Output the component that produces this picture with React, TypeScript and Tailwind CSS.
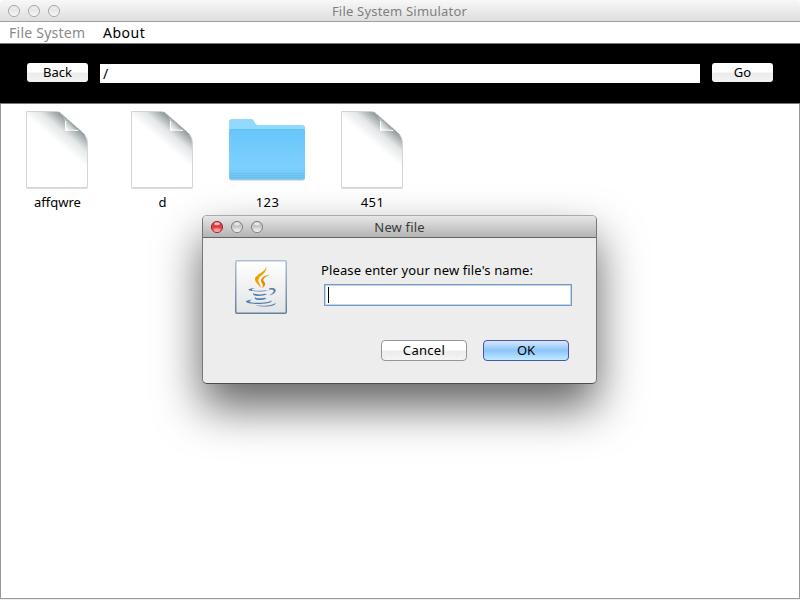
import type { ReactNode } from "react";

function TrafficLight({ x, kind }: { x: number; kind: "idle" | "red" | "grey" }) {
  return (
    <g transform={`translate(${x} 7)`}>
      <circle r="5.6" fill={`url(#light-${kind})`} stroke={kind === "red" ? "#963036" : kind === "grey" ? "#858585" : "#acacac"} />
      <ellipse cy="-3.2" rx="2.8" ry="1.5" fill="#fff" opacity={kind === "idle" ? 0.3 : 0.65} />
      {kind !== "idle" && <ellipse cy="3" rx="3.3" ry="2" fill="#fff" opacity=".3" />}
    </g>
  );
}

function TrafficLights({ active = false }: { active?: boolean }) {
  return (
    <svg width="56" height="14" viewBox="0 0 56 14" className="shrink-0">
      <defs>
        <linearGradient id="light-idle" x2="0" y2="1"><stop stopColor="#dedede" /><stop offset="1" stopColor="#f6f6f6" /></linearGradient>
        <linearGradient id="light-red" x2="0" y2="1"><stop stopColor="#ca4a4b" /><stop offset=".5" stopColor="#e7383c" /><stop offset="1" stopColor="#ff8d8a" /></linearGradient>
        <linearGradient id="light-grey" x2="0" y2="1"><stop stopColor="#b5b5b5" /><stop offset=".5" stopColor="#cbcbcb" /><stop offset="1" stopColor="#e7e7e7" /></linearGradient>
      </defs>
      <TrafficLight x={7} kind={active ? "red" : "idle"} />
      <TrafficLight x={27} kind={active ? "grey" : "idle"} />
      <TrafficLight x={47} kind={active ? "grey" : "idle"} />
    </svg>
  );
}

function FileIcon() {
  return (
    <svg width="64" height="80" viewBox="0 0 64 80">
      <defs>
        <linearGradient id="page" gradientUnits="userSpaceOnUse" x1="50" y1="15" x2="34" y2="34">
          <stop stopColor="#899194" /><stop offset=".2" stopColor="#aeb5b7" /><stop offset=".5" stopColor="#e3e6e7" /><stop offset="1" stopColor="#fff" />
        </linearGradient>
        <linearGradient id="curl" gradientUnits="userSpaceOnUse" x1="48" y1="11" x2="40" y2="19">
          <stop stopColor="#7c8285" /><stop offset=".5" stopColor="#c9ced0" /><stop offset="1" stopColor="#fff" />
        </linearGradient>
      </defs>
      <path d="M1.500 78.500h61" stroke="#ddd" />
      <path d="M1.500 1.500H31C35 1.500 37 5 41 8L57 22C61 26 62.500 28 62.500 35V77.500H1.500Z" fill="url(#page)" stroke="#d4d5d5" />
      <path d="M34 2.500C37 5 39 7 40 11V20.500C47 20 52 20 56 22Z" fill="url(#curl)" />
      <path d="M40.500 11V20.500C45 20 49 20 53 20.500" fill="none" stroke="#fff" />
      <path d="M34 2L60 25" stroke="#899295" strokeDasharray="1 1" />
    </svg>
  );
}

function FolderIcon() {
  return (
    <svg width="80" height="66" viewBox="0 0 80 66">
      <defs>
        <linearGradient id="folder" x2="0" y2="1"><stop stopColor="#68c5fa" /><stop offset=".75" stopColor="#7cd0ff" /><stop offset="1" stopColor="#6dc4f2" /></linearGradient>
      </defs>
      <path d="M2 61V6Q2 3 5 3H21C26 3 26 9 31 9H75Q78 9 78 12V61Q78 63.500 75 63.500H5Q2 63.500 2 61" fill="#bbc8ce" />
      <path d="M2 60V5Q2 2 5 2H24C28 2 27 8 31 8H75Q78 8 78 11V60Z" fill="#91d9fd" />
      <path d="M2 14Q2 12 4 12H76Q78 12 78 14V60Q78 62.500 75 62.500H5Q2 62.500 2 60Z" fill="url(#folder)" />
      <path d="M3 12.500H77M3 56.500H77M3 58.500H77M3 60.500H77" stroke="#54b4e6" strokeOpacity=".3" />
    </svg>
  );
}

function JavaIcon() {
  return (
    <svg width="52" height="54" viewBox="0 0 52 54" className="shrink-0">
      <defs>
        <linearGradient id="java-bg" x2="0" y2="1"><stop stopColor="#fff" /><stop offset="1" stopColor="#e3e4e6" /></linearGradient>
        <linearGradient id="java-edge" x2="0" y2="1"><stop stopColor="#adc0d3" /><stop offset="1" stopColor="#64809c" /></linearGradient>
      </defs>
      <rect x=".75" y=".75" width="50.500" height="52.500" rx="1" fill="url(#java-bg)" stroke="url(#java-edge)" strokeWidth="1.500" />
      <path d="M30.500 5.500C33 12 19.500 14 20 19.500C20.200 22.500 24 25 26 28C25 23 22 21.500 24 18C26 15 34 11 30.500 5.500Z" fill="#f2a000" />
      <path d="M35 14.500C30 15.500 26 17.500 26 20.500C26 23.500 29.500 24 27 28C30.500 26 31 24 29 21.500C27 19 30 17 35 14.500Z" fill="#e98c00" />
      <g fill="#507ea7">
        <path d="M20.500 28C9 29 13 31.500 23 31.500C29 31.500 32 31 34 30.200C29 30.700 18 31 17 30C16.500 29.300 18 28.700 20.500 28Z" />
        <path d="M34 28.500C43 26 43 34 34 35.500C40 32.500 40.500 28.500 34 29.800Z" />
        <path d="M18.500 33C16 36.500 26 36.800 32 34.600L30 33.800C25 34.800 19 34.500 18.500 33Z" />
        <path d="M20 37C18 40.500 26 40.800 31.500 38.800L29.500 37.700C25 38.700 20 38.500 20 37Z" />
        <path d="M17 39.500C7 40.500 10 44 22 44C31 44 38 42.500 36.500 40.500C34 43 17 43.500 14.500 41.800C14 41 16 40.500 17 39.500Z" />
        <path d="M20 45.300C31 46.500 40 45 40.500 42.500C42 47 28 47.500 20 45.300Z" />
      </g>
    </svg>
  );
}

function FileItem({ name, folder = false, wide = false }: { name: string; folder?: boolean; wide?: boolean }) {
  return (
    <div className="flex w-[105px] flex-col items-center">
      <div className="flex h-[80px] items-center justify-center pr-[2px]">{folder ? <FolderIcon /> : <FileIcon />}</div>
      <span className={`mt-[3px] h-[18px] text-[13px] leading-[18px] ${wide ? "tracking-[0.4px]" : ""}`}>{name}</span>
    </div>
  );
}

function ToolbarButton({ children }: { children: ReactNode }) {
  return <button className="h-[19px] w-[61px] shrink-0 rounded-[3px] bg-linear-to-b from-white from-45% via-[#ececec] via-55% to-[#f3f3f3] text-[13px] leading-[19px]">{children}</button>;
}

export default function App() {
  return (
    <div className="relative flex h-[600px] w-[800px] flex-col overflow-hidden bg-white font-['Noto_Sans',sans-serif] text-black">
      <header className="grid h-[22px] shrink-0 grid-cols-[1fr_auto_1fr] items-center rounded-t-[4px] border-b border-[#a0a0a0] bg-linear-to-b from-[#f8f8f8] to-[#dedede] pl-[7px] pr-[8px]">
        <TrafficLights />
        <h1 className="text-[13px] leading-[20px] tracking-[0.2px] text-[#808080]">File System Simulator</h1>
      </header>
      <nav className="flex h-[22px] shrink-0 gap-[18px] border-b border-[#777] pl-[9px] text-[14px] leading-[21px]">
        <span className="w-[76px] whitespace-nowrap tracking-[0.25px] text-[#888]">File System</span>
        <span className="tracking-[0.5px]">About</span>
      </nav>
      <div className="flex h-[60px] shrink-0 items-start border-b border-[#777] bg-black pl-[27px] pt-[19px]">
        <ToolbarButton>Back</ToolbarButton>
        <div className="ml-[12px] mt-px h-[19px] w-[600px] bg-white pl-[3px] text-[14px] leading-[19px]">/</div>
        <div className="ml-[12px] flex"><ToolbarButton>Go</ToolbarButton></div>
      </div>
      <main className="flex h-[495px] shrink-0 border border-t-0 border-[#999] pl-[4px] pt-[6px]">
        <FileItem name="affqwre" />
        <FileItem name="d" />
        <FileItem name="123" folder wide />
        <FileItem name="451" wide />
      </main>
      <div className="h-px w-full bg-[#eee]" />

      <section className="absolute left-[202px] top-[215px] flex h-[169px] w-[395px] flex-col overflow-visible rounded-[5px] border border-[#777] border-t-[#aaa] border-b-[#4b4b4b] bg-[#ededed] shadow-[0_23px_46px_rgba(0,0,0,0.62)]">
        <div className="grid h-[22px] shrink-0 grid-cols-[1fr_auto_1fr] items-center rounded-t-[4px] border-b border-[#646464] bg-linear-to-b from-[#e7e7e7] to-[#b4b4b4] px-[7px]">
          <TrafficLights active />
          <h2 className="text-[13px] leading-[20px] tracking-[0.15px] text-[#393939]">New file</h2>
        </div>
        <div className="flex pl-[32px] pt-[22px]">
          <JavaIcon />
          <div className="ml-[34px]">
            <p className="h-[19px] whitespace-nowrap text-[13px] leading-[20px] tracking-[0.13px]">Please enter your new file's name:</p>
            <div className="ml-[3px] mt-[5px] flex h-[22px] w-[248px] items-center border border-[#7899c2] bg-white pl-[3px] shadow-[inset_0_0_0_1px_#bed7ed]">
              <span className="h-[16px] w-px bg-black" />
            </div>
          </div>
        </div>
        <div className="mt-[26px] flex gap-[16px] pl-[178px]">
          <button className="h-[21px] w-[86px] rounded-[4px] border border-[#969696] bg-linear-to-b from-white from-45% via-[#ececec] via-55% to-[#f5f5f5] text-[13px] leading-[19px] tracking-[0.3px]">Cancel</button>
          <button className="h-[21px] w-[86px] rounded-[4px] border border-[#5153a5] bg-linear-to-b from-[#d5e7fb] from-0% via-[#8dc4fa] via-50% to-[#bdecff] text-[13px] leading-[19px]">OK</button>
        </div>
      </section>
    </div>
  );
}
